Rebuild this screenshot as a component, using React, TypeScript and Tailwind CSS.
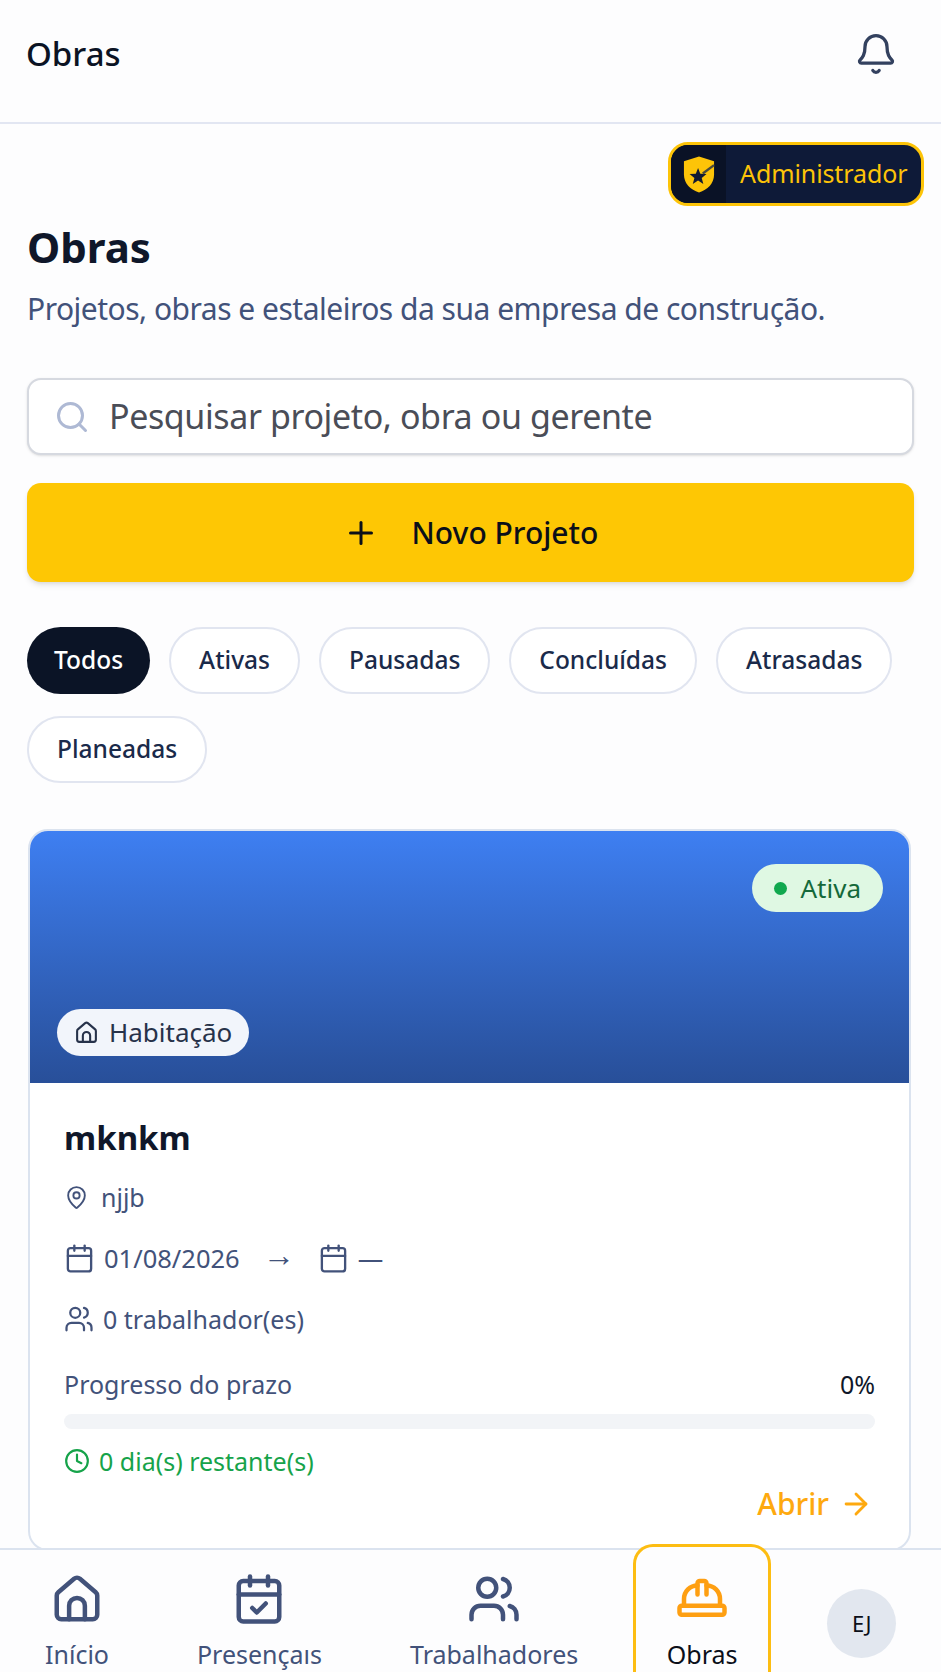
import { ArrowRight, Bell, Calendar, CalendarCheck, Clock, HardHat, MapPin, Plus, Search, Users } from "lucide-react";

const filters = ["Ativas", "Pausadas", "Concluídas", "Atrasadas", "Planeadas"];

function HomeIcon({ className }: { className: string }) {
  return (
    <svg viewBox="0 0 24 24" fill="none" stroke="currentColor" strokeWidth="2" strokeLinecap="round" strokeLinejoin="round" className={className}>
      <path d="M3 10.5a2 2 0 0 1 .7-1.5l7-6a2 2 0 0 1 2.6 0l7 6a2 2 0 0 1 .7 1.5V19a2 2 0 0 1-2 2H5a2 2 0 0 1-2-2z" />
      <path d="M8.5 21v-6a3.5 3.5 0 0 1 7 0v6" />
    </svg>
  );
}

function ShieldStar() {
  return (
    <svg viewBox="0 0 34 40" className="w-[32px] h-[39px]">
      <path d="M17 1 L33 6 V20 C33 30 26 36 17 39 C8 36 1 30 1 20 V6 Z" fill="#fdc408" />
      <path d="M16 13 l2.4 6.2 6.6 .3 -5.1 4.2 1.7 6.4 -5.6 -3.6 -5.6 3.6 1.7 -6.4 -5.1 -4.2 6.6 -.3 z" fill="#111a33" />
      <path d="M21 19 L33 10" stroke="#4a4a3c" strokeWidth="2.5" />
    </svg>
  );
}

export default function App() {
  return (
    <div className="h-[1672px] w-[941px] overflow-hidden flex flex-col bg-[#fdfdfe] font-['Noto_Sans',sans-serif]">
      {/* Top bar */}
      <header className="h-[124px] shrink-0 flex items-center justify-between pl-[26px] pr-[43px] pb-[14px] border-b-2 border-[#e2e6f2]">
        <h1 className="text-[33px] font-medium text-[#0b1324]">Obras</h1>
        <Bell className="w-[44px] h-[44px] text-[#33415f]" strokeWidth={1.8} />
      </header>

      <main className="flex-1 min-h-0 px-[27px] overflow-hidden">
        <div className="flex justify-end mt-[18px] -mr-[10px]">
          <div className="flex h-[64px] w-[256px] rounded-[20px] border-[3px] border-[#fdc408] bg-[#0e1a38] overflow-hidden">
            <div className="w-[55px] flex items-center justify-center bg-[#0a1226]">
              <ShieldStar />
            </div>
            <span className="pl-[14px] flex items-center text-[25px] tracking-[-0.1px] text-[#fdc408]">Administrador</span>
          </div>
        </div>

        <h2 className="mt-[13px] text-[42px] leading-[56px] font-bold text-[#0f172a]">Obras</h2>
        <p className="mt-[13px] text-[30px] leading-[42px] tracking-[-0.5px] text-[#42527a]">Projetos, obras e estaleiros da sua empresa de construção.</p>

        {/* Search */}
        <div className="mt-[48px] h-[77px] flex items-center gap-[19px] pl-[25px] rounded-[14px] border-2 border-[#d6d9e0] bg-white shadow-sm">
          <Search className="w-[36px] h-[36px] text-[#aeb9d4]" strokeWidth={2} />
          <span className="text-[34px] tracking-[-0.4px] text-[#4a4d57]">Pesquisar projeto, obra ou gerente</span>
        </div>

        <button className="mt-[28px] w-full h-[99px] flex items-center justify-center gap-[33px] rounded-[14px] bg-[#fec704] shadow-md text-[30px] font-medium text-[#0b0f19]">
          <Plus className="w-[36px] h-[36px]" strokeWidth={2} />
          Novo Projeto
        </button>

        {/* Filters */}
        <div className="mt-[45px] flex flex-wrap gap-x-[19px] gap-y-[22px]">
          <span className="h-[67px] px-[27px] flex items-center rounded-full bg-[#0b1426] text-white text-[24.5px] font-medium">Todos</span>
          {filters.map((f) => (
            <span key={f} className="h-[67px] px-[28px] flex items-center rounded-full border-2 border-[#e1e5f0] bg-white text-[24.5px] font-medium text-[#1a2a4a]">{f}</span>
          ))}
        </div>

        {/* Project card */}
        <article className="mt-[46px] ml-[1px] mr-[3px] rounded-[20px] border-2 border-[#dbe3ef] bg-white overflow-hidden">
          <div className="relative h-[252px] bg-gradient-to-b from-[#3e7ff2] to-[#284f99]">
            <span className="absolute top-[33px] right-[26px] h-[48px] px-[22px] flex items-center gap-[13px] rounded-full bg-[#dff8e3] text-[26px] text-[#14693a]">
              <span className="w-[13px] h-[13px] rounded-full bg-[#10a84e]" />
              Ativa
            </span>
            <span className="absolute left-[27px] bottom-[27px] h-[47px] px-[17px] flex items-center gap-[10px] rounded-full bg-[#f2f5fb] text-[26px] text-[#27324a]">
              <HomeIcon className="w-[25px] h-[25px]" />
              Habitação
            </span>
          </div>

          <div className="px-[34px] pt-[30px] pb-[23px]">
            <h3 className="text-[33px] leading-[50px] font-bold text-[#0f172a]">mknkm</h3>
            <div className="mt-[16px] flex items-center gap-[12px] text-[25px] leading-[36px] text-[#42527a]">
              <MapPin className="w-[25px] h-[25px]" strokeWidth={1.8} />
              njjb
            </div>
            <div className="mt-[25px] flex items-center h-[36px] text-[25.5px] leading-[36px] text-[#42527a]">
              <Calendar className="w-[31px] h-[31px] mr-[9px]" strokeWidth={1.8} />
              01/08/2026
              <span className="mx-[23px] pb-[8px] text-[32px] leading-[28px]">→</span>
              <Calendar className="w-[31px] h-[31px] mr-[9px]" strokeWidth={1.8} />
              —
            </div>
            <div className="mt-[25px] flex items-center gap-[9px] text-[25px] leading-[36px] text-[#42527a]">
              <Users className="w-[30px] h-[30px]" strokeWidth={1.8} />
              0 trabalhador(es)
            </div>
            <div className="mt-[29px] flex justify-between text-[25px] leading-[36px]">
              <span className="text-[#42527a]">Progresso do prazo</span>
              <span className="text-[#0f172a]">0%</span>
            </div>
            <div className="mt-[12px] h-[15px] rounded-full bg-[#f2f4f7]" />
            <div className="mt-[14px] flex items-center gap-[9px] text-[25px] leading-[36px] text-[#16a34a]">
              <Clock className="w-[26px] h-[26px]" strokeWidth={2} />
              0 dia(s) restante(s)
            </div>
            <div className="mt-[2px] flex justify-end items-center gap-[10px] pr-[2px] text-[30px] font-medium text-[#fea90f]">
              Abrir
              <ArrowRight className="w-[34px] h-[34px]" strokeWidth={2} />
            </div>
          </div>
        </article>
      </main>

      {/* Bottom nav */}
      <nav className="relative h-[124px] shrink-0 flex items-start pl-[14px] gap-[26px] border-t-2 border-[#dbe3ef] bg-[#fdfdfe]">
        <div className="pt-[22px] px-[31px] flex flex-col items-center text-[#42527a] text-[25px] leading-[32px]">
          <HomeIcon className="w-[54px] h-[54px]" />
          <span className="mt-[12px]">Início</span>
        </div>
        <div className="pt-[22px] px-[31px] flex flex-col items-center text-[#42527a] text-[25px] leading-[32px]">
          <CalendarCheck className="w-[54px] h-[54px]" strokeWidth={2} />
          <span className="mt-[12px]">Presençaıs</span>
        </div>
        <div className="pt-[22px] px-[31px] flex flex-col items-center text-[#42527a] text-[25px] leading-[32px]">
          <Users className="w-[54px] h-[54px]" strokeWidth={2} />
          <span className="mt-[12px]">Trabalhadores</span>
        </div>
        <div className="-ml-[2px] -mt-[6px] h-[130px] w-[138px] pt-[25px] flex flex-col items-center rounded-t-[20px] border-[3px] border-b-0 border-[#fdbd12] bg-[#fdfdfe] text-[25px] leading-[32px] text-[#0b0f19]">
          <HardHat className="w-[54px] h-[54px] text-[#fe9f12]" strokeWidth={2} />
          <span className="mt-[12px]">Obras</span>
        </div>
        <div className="ml-[30px] mt-[39px] w-[69px] h-[69px] flex items-center justify-center rounded-full bg-[#e2e7ef] text-[22px] text-[#0b0f19]">EJ</div>
      </nav>
    </div>
  );
}
